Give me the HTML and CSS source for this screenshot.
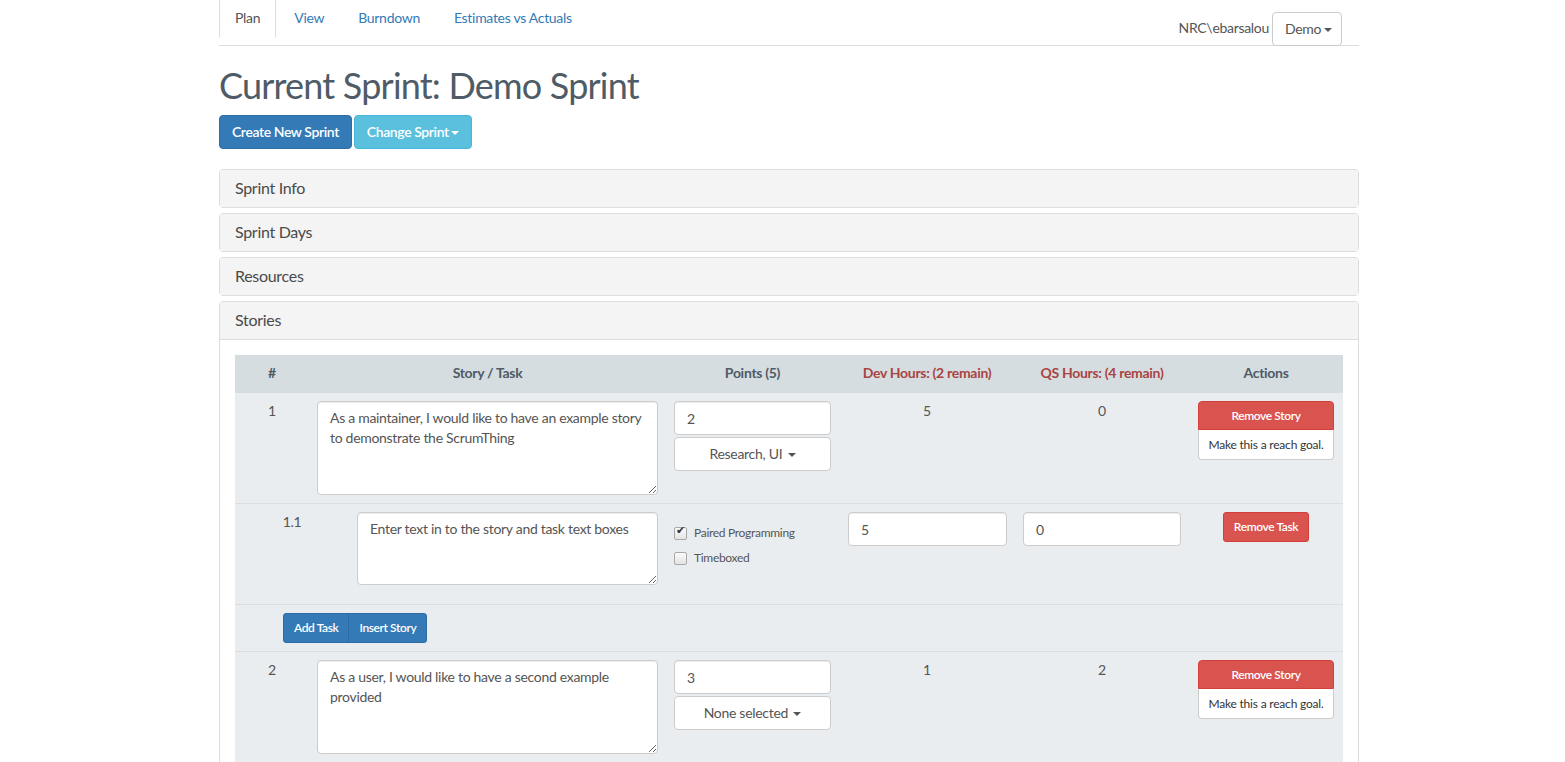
FILE: index.html
```html
<!DOCTYPE html>
<html>
<head>
<meta charset="utf-8">
<title>ScrumThing - Plan</title>
<link rel="stylesheet" href="styles.css">
</head>
<body>
<div class="container">
  <nav class="topnav">
    <ul class="tabs">
      <li class="tab active"><a>Plan</a></li>
      <li class="tab"><a>View</a></li>
      <li class="tab"><a>Burndown</a></li>
      <li class="tab"><a>Estimates vs Actuals</a></li>
    </ul>
    <div class="user">
      <span class="username">NRC\ebarsalou</span>
      <button class="btn btn-default btn-demo">Demo <span class="caret"></span></button>
    </div>
  </nav>

  <h1 class="title">Current Sprint: Demo Sprint</h1>
  <div class="toolbar">
    <button class="btn btn-primary">Create New Sprint</button>
    <button class="btn btn-info">Change Sprint<span class="caret"></span></button>
  </div>

  <div class="panel-group">
    <div class="panel"><div class="panel-heading">Sprint Info</div></div>
    <div class="panel"><div class="panel-heading">Sprint Days</div></div>
    <div class="panel"><div class="panel-heading">Resources</div></div>
    <div class="panel">
      <div class="panel-heading">Stories</div>
      <div class="panel-body">
        <div class="stories">
          <div class="row head">
            <div class="cell">#</div>
            <div class="cell">Story / Task</div>
            <div class="cell">Points (5)</div>
            <div class="cell danger">Dev Hours: (2 remain)</div>
            <div class="cell danger">QS Hours: (4 remain)</div>
            <div class="cell">Actions</div>
          </div>

          <div class="row story">
            <div class="cell num">1</div>
            <div class="cell"><textarea class="form-control story-text">As a maintainer, I would like to have an example story to demonstrate the ScrumThing</textarea></div>
            <div class="cell stack">
              <input class="form-control" value="2">
              <button class="btn btn-default btn-block">Research, UI <span class="caret"></span></button>
            </div>
            <div class="cell num">5</div>
            <div class="cell num">0</div>
            <div class="cell">
              <div class="action-group">
                <button class="btn btn-danger btn-sm btn-remove-story">Remove Story</button>
                <button class="btn btn-reach">Make this a reach goal.</button>
              </div>
            </div>
          </div>

          <div class="row task">
            <div class="cell num">1.1</div>
            <div class="cell"><textarea class="form-control task-text">Enter text in to the story and task text boxes</textarea></div>
            <div class="cell checks">
              <label class="check"><input type="checkbox" checked> Paired Programming</label>
              <label class="check"><input type="checkbox"> Timeboxed</label>
            </div>
            <div class="cell"><input class="form-control" value="5"></div>
            <div class="cell"><input class="form-control" value="0"></div>
            <div class="cell center"><button class="btn btn-danger btn-sm">Remove Task</button></div>
          </div>

          <div class="row add">
            <div class="btn-group">
              <button class="btn btn-primary btn-sm">Add Task</button>
              <button class="btn btn-primary btn-sm">Insert Story</button>
            </div>
          </div>

          <div class="row story">
            <div class="cell num">2</div>
            <div class="cell"><textarea class="form-control story-text">As a user, I would like to have a second example provided</textarea></div>
            <div class="cell stack">
              <input class="form-control" value="3">
              <button class="btn btn-default btn-block">None selected <span class="caret"></span></button>
            </div>
            <div class="cell num">1</div>
            <div class="cell num">2</div>
            <div class="cell">
              <div class="action-group">
                <button class="btn btn-danger btn-sm btn-remove-story">Remove Story</button>
                <button class="btn btn-reach">Make this a reach goal.</button>
              </div>
            </div>
          </div>
        </div>
      </div>
    </div>
  </div>
</div>
</body>
</html>
```

FILE: styles.css
```css
* { box-sizing: border-box; }

html, body {
  margin: 0;
  padding: 0;
  background: #fff;
}

body {
  font-family: Lato, "Open Sans", sans-serif;
  font-size: 14px;
  line-height: 20px;
  color: #555;
  letter-spacing: -0.3px;
}

.container {
  width: 1140px;
  margin: 0 0 0 219px;
}

/* top nav */
.topnav {
  display: flex;
  justify-content: space-between;
  align-items: flex-end;
  height: 46px;
  border-bottom: 1px solid #ddd;
  padding-right: 17px;
}

.tabs {
  list-style: none;
  margin: 0;
  padding: 0;
  display: flex;
  align-self: flex-start;
}

.tab a {
  display: block;
  padding: 8px 15px 10px;
  margin-right: 2px;
  color: #337ab7;
  border: 1px solid transparent;
  border-top: 0;
  height: 38px;
}

.tab.active a {
  color: #555;
  border-left-color: #ddd;
  border-right-color: #ddd;
}

.user {
  display: flex;
  align-items: flex-end;
  margin-bottom: -1px;
}

.username {
  padding-bottom: 8px;
  margin-right: 3px;
  font-size: 14px;
}

.btn-demo {
  height: 34px;
  width: 70px;
  padding: 6px 0;
  text-align: center;
  white-space: nowrap;
  border-radius: 4px;
}

.btn-demo .caret { margin-left: 0; }

/* heading */
.title {
  font-size: 36px;
  font-weight: 400;
  line-height: 40px;
  margin: 19px 0 10px;
  color: #4f5b66;
  letter-spacing: -0.8px;
}

.toolbar {
  display: flex;
  gap: 2px;
  margin-bottom: 20px;
}

/* buttons */
.btn {
  font-family: inherit;
  font-size: 14px;
  line-height: 20px;
  letter-spacing: -0.4px;
  padding: 6px 12px;
  border: 1px solid transparent;
  border-radius: 4px;
  cursor: pointer;
  font-weight: 600;
  color: #fff;
  white-space: nowrap;
}

.btn-primary { background: #337ab7; border-color: #2e6da4; }
.btn-info { background: #5bc0de; border-color: #46b8da; }
.btn-danger { background: #d9534f; border-color: #d43f3a; }
.btn-default {
  background: #fff;
  border-color: #ccc;
  color: #555;
  font-weight: 400;
  letter-spacing: -0.3px;
}

.btn-block { display: block; width: 100%; }

.btn-sm {
  font-size: 12px;
  line-height: 18px;
  padding: 5px 10px;
  border-radius: 3px;
}

.caret {
  display: inline-block;
  width: 0;
  height: 0;
  margin-left: 2px;
  vertical-align: middle;
  border-top: 4px solid;
  border-left: 4px solid transparent;
  border-right: 4px solid transparent;
}

/* panels */
.panel-group .panel + .panel { margin-top: 5px; }

.panel {
  border: 1px solid #ddd;
  border-radius: 4px;
  background: #fff;
}

.panel-heading {
  background: #f4f4f4;
  padding: 9px 15px 11px;
  font-size: 16px;
  line-height: 17px;
  color: #4a4a4a;
  border-radius: 3px 3px 0 0;
}

.panel-body {
  padding: 15px;
  border-top: 1px solid #ddd;
}

/* stories table */
.stories {
  background: #eaedf0;
}

.row {
  display: grid;
  grid-template-columns: 74px 357px 173px 176px 174px 154px;
  border-top: 1px solid #ddd;
}

.row.head {
  background: #d6dde1;
  border-top: 0;
  border-bottom: 2px solid #d6dde1;
  font-weight: 700;
  color: #4f5b66;
}

.row.head + .row { border-top: 0; }

.row.task {
  grid-template-columns: 114px 317px 174px 175px 174px 154px;
}

.cell {
  padding: 8px;
  text-align: center;
}

.cell.danger { color: #a94442; }

.cell.num { color: #555; }

.cell.center { text-align: center; }

.form-control {
  display: block;
  width: 100%;
  font-family: inherit;
  font-size: 14px;
  line-height: 20px;
  letter-spacing: -0.3px;
  color: #555;
  background: #fff;
  border: 1px solid #ccc;
  border-radius: 4px;
  padding: 6px 12px;
  height: 34px;
  text-align: left;
  box-shadow: inset 0 1px 1px rgba(0,0,0,.075);
}

textarea.form-control {
  resize: vertical;
}

.story-text { height: 94px; }
.task-text { height: 73px; margin-bottom: 11px; }

.stack { display: flex; flex-direction: column; gap: 2px; }

.stack .btn-default { height: 34px; }

.action-group {
  display: flex;
  flex-direction: column;
  align-items: stretch;
  margin: 0 1px;
}

.btn-remove-story {
  border-radius: 4px 4px 0 0;
  height: 29px;
}

.btn-reach {
  background: #fff;
  border: 1px solid #ccc;
  border-top: 0;
  border-radius: 0 0 4px 4px;
  color: #333;
  font-weight: 400;
  font-size: 12px;
  line-height: 18px;
  letter-spacing: -0.2px;
  padding: 6px 6px 5px;
  height: 30px;
}

.checks {
  text-align: left;
  display: flex;
  flex-direction: column;
}

.check {
  display: flex;
  align-items: center;
  gap: 7px;
  font-size: 12px;
  line-height: 20px;
  color: #555;
}

.check:first-child { margin-top: 11px; }
.check + .check { margin-top: 5px; }

.check input {
  appearance: none;
  -webkit-appearance: none;
  width: 13px;
  height: 13px;
  margin: 0;
  border: 1px solid #a9a9a9;
  border-radius: 2px;
  background: linear-gradient(#fafafa, #e4e4e4);
  position: relative;
}

.check input:checked::after {
  content: "\2714";
  position: absolute;
  left: 1px;
  top: -4px;
  font-size: 11px;
  color: #333;
}

.row.add {
  display: block;
  padding: 8px 8px 8px 48px;
}

.btn-group { display: inline-flex; }
.btn-group .btn:first-child { border-radius: 3px 0 0 3px; }
.btn-group .btn:last-child { border-radius: 0 3px 3px 0; margin-left: -1px; }
```
